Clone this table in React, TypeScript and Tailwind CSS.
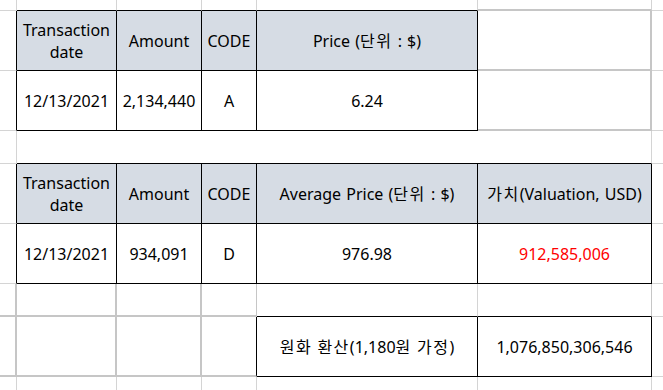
import React from "react";

const C = ({ className = "", children }: { className?: string; children?: React.ReactNode }) => (
  <div className={"flex items-center justify-center text-center " + className}>{children}</div>
);

const K = ({ children }: { children: React.ReactNode }) => <span className="tracking-[1.5px]">{children}</span>;

export default function App() {
  return (
    <div className="w-[663px] h-[390px] overflow-hidden bg-white text-black font-['Noto_Sans','Noto_Sans_CJK_KR',sans-serif] text-[16px] leading-[22px] [word-spacing:1px]">
      <div className="grid grid-cols-[17px_100px_85px_55px_221px_174px_11px] grid-rows-[11px_60px_60px_33px_60px_60px_33px_60px_13px]">
        {/* Row 0 */}
        <C className="border-r border-b border-r-[#d4d4d4] border-b-[#d4d4d4]" />
        <C className="border-r border-b border-r-[#d4d4d4] border-b-black" />
        <C className="border-r border-b border-r-[#d4d4d4] border-b-black" />
        <C className="border-r border-b border-r-[#d4d4d4] border-b-black" />
        <C className="border-r border-b border-r-[#d4d4d4] border-b-black" />
        <C className="border-r border-b-2 border-r-[#d4d4d4] border-b-[#c6c6c6]" />
        <C className="border-b border-b-[#d4d4d4]" />

        {/* Row 1 header */}
        <C className="border-r border-b border-r-black border-b-[#d4d4d4]" />
        <C className="border-r border-b border-black bg-[#d6dce4]">Transaction<br />date</C>
        <C className="border-r border-b border-black bg-[#d6dce4]">Amount</C>
        <C className="border-r border-b border-black bg-[#d6dce4]">CODE</C>
        <C className="border-r border-b border-black bg-[#d6dce4]">
          <span>Price (<K>단위</K> : $)</span>
        </C>
        <C className="border-r-2 border-b-2 border-[#c6c6c6]" />
        <C className="border-b border-b-[#d4d4d4]" />

        {/* Row 2 */}
        <C className="border-r border-b border-r-black border-b-[#d4d4d4]" />
        <C className="border-r border-b border-black">12/13/2021</C>
        <C className="border-r border-b border-black">2,134,440</C>
        <C className="border-r border-b border-black">A</C>
        <C className="border-r border-b border-black">6.24</C>
        <C className="border-r-2 border-b-2 border-[#c6c6c6]" />
        <C className="border-b border-b-[#d4d4d4]" />

        {/* Row 3 spacer */}
        <C className="border-r border-b border-[#d4d4d4]" />
        <C className="col-span-5 border-r border-b border-r-[#d4d4d4] border-b-black" />
        <C className="border-b border-b-[#d4d4d4]" />

        {/* Row 4 header */}
        <C className="border-r border-b border-r-black border-b-[#d4d4d4]" />
        <C className="border-r border-b border-black bg-[#d6dce4]">Transaction<br />date</C>
        <C className="border-r border-b border-black bg-[#d6dce4]">Amount</C>
        <C className="border-r border-b border-black bg-[#d6dce4]">CODE</C>
        <C className="border-r border-b border-black bg-[#d6dce4]">
          <span>Average Price (<K>단위</K> : $)</span>
        </C>
        <C className="border-r border-b border-black bg-[#d6dce4]">
          <span><K>가치</K>(Valuation, USD)</span>
        </C>
        <C className="border-b border-b-[#d4d4d4]" />

        {/* Row 5 */}
        <C className="border-r border-b border-r-black border-b-[#d4d4d4]" />
        <C className="border-r border-b border-black">12/13/2021</C>
        <C className="border-r border-b border-black">934,091</C>
        <C className="border-r border-b border-black">D</C>
        <C className="border-r border-b border-black">976.98</C>
        <C className="border-r border-b border-black text-[#ff0000]">912,585,006</C>
        <C className="border-b border-b-[#d4d4d4]" />

        {/* Row 6 */}
        <C className="border-r-2 border-b-2 border-[#c6c6c6]" />
        <C className="border-r-2 border-b-2 border-[#c6c6c6]" />
        <C className="border-r-2 border-b-2 border-[#c6c6c6]" />
        <C className="border-r border-b-2 border-r-[#c6c6c6] border-b-[#c6c6c6]" />
        <C className="border-r border-b border-r-[#d4d4d4] border-b-black" />
        <C className="border-r border-b border-r-[#c6c6c6] border-b-black" />
        <C className="border-b border-b-[#d4d4d4]" />

        {/* Row 7 */}
        <C className="border-r-2 border-b-2 border-[#c6c6c6]" />
        <C className="border-r-2 border-b-2 border-[#c6c6c6]" />
        <C className="border-r-2 border-b-2 border-[#c6c6c6]" />
        <C className="border-r border-b-2 border-r-black border-b-[#c6c6c6]" />
        <C className="border-r border-b border-black">
          <span><K>원화</K> <K>환산</K>(1,180<K>원</K> <K>가정</K>)</span>
        </C>
        <C className="border-r border-b border-black">1,076,850,306,546</C>
        <C className="border-b border-b-[#d4d4d4]" />

        {/* Row 8 */}
        <C className="border-r border-r-[#d4d4d4]" />
        <C className="border-r border-r-[#d4d4d4]" />
        <C className="border-r border-r-[#d4d4d4]" />
        <C className="border-r border-r-[#d4d4d4]" />
        <C className="border-r border-r-[#d4d4d4]" />
        <C className="border-r border-r-[#d4d4d4]" />
        <C />
      </div>
    </div>
  );
}
